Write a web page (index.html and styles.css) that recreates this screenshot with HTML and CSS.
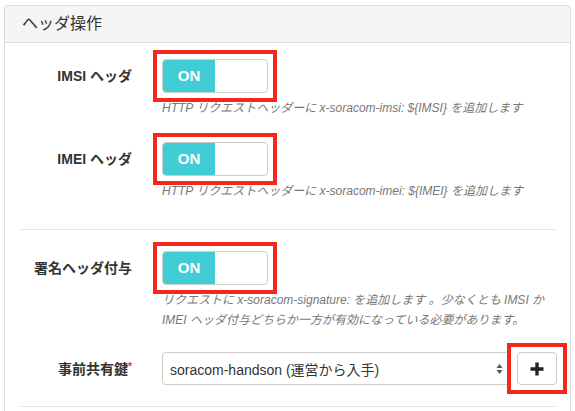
FILE: index.html
```html
<!DOCTYPE html>
<html lang="ja">
<head>
<meta charset="utf-8">
<link rel="stylesheet" href="styles.css">
</head>
<body>
<div class="page">
  <div class="panel">
    <div class="panel-heading">ヘッダ操作</div>
    <div class="panel-body">
      <div class="row row-1">
        <div class="label">IMSI ヘッダ</div>
        <div class="control">
          <div class="mark"><div class="toggle"><span class="on">ON</span><span class="off"></span></div></div>
          <div class="help">HTTP リクエストヘッダーに x-soracom-imsi: ${IMSI} を追加します</div>
        </div>
      </div>
      <div class="row row-2">
        <div class="label">IMEI ヘッダ</div>
        <div class="control">
          <div class="mark"><div class="toggle"><span class="on">ON</span><span class="off"></span></div></div>
          <div class="help">HTTP リクエストヘッダーに x-soracom-imei: ${IMEI} を追加します</div>
        </div>
      </div>
      <hr class="divider divider-top">
      <div class="row row-3">
        <div class="label">署名ヘッダ付与</div>
        <div class="control">
          <div class="mark"><div class="toggle"><span class="on">ON</span><span class="off"></span></div></div>
          <div class="help">リクエストに x-soracom-signature: を追加します 。少なくとも IMSI か<br>IMEI ヘッダ付与どちらか一方が有効になっている必要があります。</div>
        </div>
      </div>
      <div class="row row-4">
        <div class="label">事前共有鍵<span class="req">*</span></div>
        <div class="control input-group">
          <div class="select">
            <span class="select-text">soracom-handson (運営から入手)</span>
            <svg class="select-arrows" width="7" height="12" viewBox="0 0 7 12"><path d="M3.5 1 L6.5 5 L0.5 5 Z M3.5 11 L6.5 7 L0.5 7 Z" fill="#555"/></svg>
          </div>
          <div class="mark mark-btn">
            <div class="btn">
              <svg width="14" height="14" viewBox="0 0 14 14"><path d="M5.3 0.5 H8.7 V5.3 H13.5 V8.7 H8.7 V13.5 H5.3 V8.7 H0.5 V5.3 H5.3 Z" fill="#222"/></svg>
            </div>
          </div>
        </div>
      </div>
      <hr class="divider">
    </div>
  </div>
</div>
</body>
</html>
```
FILE: styles.css
```css
html, body {
  margin: 0;
  padding: 0;
  background: #fff;
}
body {
  font-family: "Liberation Sans", "Noto Sans CJK JP", sans-serif;
  color: #333;
  font-size: 14px;
}
.page {
  padding: 5px 4px 0 4px;
}
.panel {
  border: 1px solid #ddd;
  border-bottom: none;
  border-radius: 4px 4px 0 0;
  width: 565px;
  height: 420px;
  overflow: hidden;
}
.panel-heading {
  background: #f5f5f5;
  border-bottom: 1px solid #ddd;
  height: 36px;
  line-height: 36px;
  padding-left: 17px;
  font-size: 16px;
  color: #333;
}
.panel-body {
  padding: 16px 14px 0 15px;
}
.row {
  display: grid;
  grid-template-columns: 112px 1fr;
  column-gap: 30px;
}
.row-1 { margin-bottom: 24px; }
.row-2 { margin-bottom: 28px; }
.row-3 { margin-bottom: 22px; }
.row-4 { margin-bottom: 21px; }
.label {
  font-weight: bold;
  text-align: right;
  padding-top: 7px;
  line-height: 20px;
  font-size: 14px;
  color: #333;
}
.req {
  color: #c9302c;
  font-size: 10px;
  vertical-align: top;
  position: relative;
  top: -2px;
}
.control {
  display: flex;
  flex-direction: column;
  align-items: flex-start;
}
.mark {
  border: 4px solid #f5271c;
  padding: 5px;
  margin: -9px;
  position: relative;
}
.mark-btn {
  padding: 5px 6px;
  margin: -9px -10px;
}
.toggle {
  width: 104px;
  height: 32px;
  border: 1px solid #ccc;
  border-radius: 4px;
  display: flex;
  background: #fff;
}
.toggle .on {
  width: 52px;
  background: #40cdd5;
  color: #fff;
  font-weight: bold;
  font-size: 15px;
  line-height: 32px;
  text-align: center;
  border-radius: 3px 0 0 3px;
}
.toggle .off {
  flex: 1;
}
.help {
  margin-top: 5px;
  font-size: 12px;
  line-height: 20px;
  font-style: italic;
  color: #777;
  white-space: nowrap;
}
.divider {
  border: none;
  border-top: 1px solid #e5e5e5;
  margin: 0;
  height: 0;
}
.divider-top {
  margin-bottom: 21px;
}
.input-group {
  flex-direction: row;
  align-items: center;
}
.select {
  height: 31px;
  border: 1px solid #ccc;
  border-radius: 4px;
  display: flex;
  align-items: center;
  justify-content: space-between;
  padding: 0 6px 0 7px;
  width: 333px;
  margin-right: 7px;
}
.select-text {
  font-size: 14px;
  color: #333;
}
.select-arrows {
  display: block;
}
.btn {
  width: 38px;
  height: 31px;
  border: 1px solid #ccc;
  border-radius: 4px;
  display: flex;
  align-items: center;
  justify-content: center;
  background: #fff;
}
```
